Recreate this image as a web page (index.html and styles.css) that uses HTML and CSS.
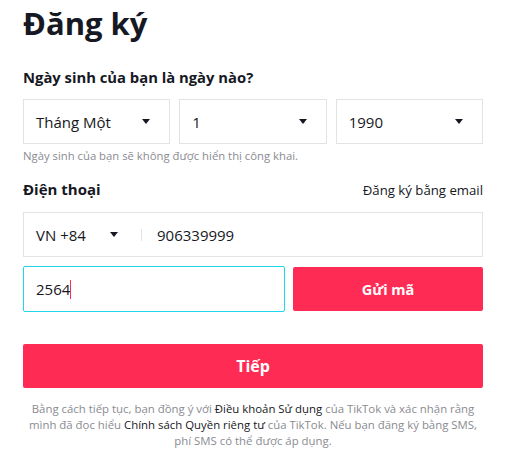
FILE: index.html
```html
<!DOCTYPE html>
<html lang="vi">
<head>
<meta charset="utf-8">
<link rel="stylesheet" href="styles.css">
</head>
<body>
<div class="page">
  <h1 class="title">Đăng ký</h1>
  <div class="label">Ngày sinh của bạn là ngày nào?</div>
  <div class="selects">
    <div class="select"><span>Tháng Một</span><span class="caret"></span></div>
    <div class="select"><span>1</span><span class="caret"></span></div>
    <div class="select"><span>1990</span><span class="caret"></span></div>
  </div>
  <div class="hint">Ngày sinh của bạn sẽ không được hiển thị công khai.</div>
  <div class="phone-head">
    <div class="label-inline">Điện thoại</div>
    <a class="email-link">Đăng ký bằng email</a>
  </div>
  <div class="phone">
    <div class="country"><span>VN +84</span><span class="caret"></span></div>
    <div class="divider"></div>
    <div class="number">906339999</div>
  </div>
  <div class="code-row">
    <div class="code"><span>2564</span><span class="cursor"></span></div>
    <button class="btn send">Gửi mã</button>
  </div>
  <button class="btn next">Tiếp</button>
  <p class="terms">Bằng cách tiếp tục, bạn đồng ý với <b>Điều khoản Sử dụng</b> của TikTok và xác nhận rằng<br>mình đã đọc hiểu <b>Chính sách Quyền riêng tư</b> của TikTok. Nếu bạn đăng ký bằng SMS,<br>phí SMS có thể được áp dụng.</p>
</div>
</body>
</html>
```
FILE: styles.css
```css
* { box-sizing: border-box; }
html, body { margin: 0; padding: 0; background: #fff; }
body {
  font-family: "Open Sans", Lato, "Liberation Sans", sans-serif;
  color: #161823;
}
.page { padding: 0 25px 0 23px; width: 508px; }
.title {
  margin: 0;
  font-size: 31px;
  font-weight: 700;
  line-height: 44px;
  height: 58px;
  padding-top: 1px;
}
.label {
  font-size: 14.8px;
  font-weight: 700;
  line-height: 24px;
  height: 41px;
  padding-top: 7px;
}
.selects {
  display: grid;
  grid-template-columns: 1fr 1fr 1fr;
  gap: 9px;
}
.select {
  height: 45px;
  border: 1px solid #e3e3e4;
  display: flex;
  align-items: center;
  justify-content: space-between;
  padding: 0 19px 0 12px;
  font-size: 15px;
}
.caret {
  width: 0; height: 0;
  border-left: 4px solid transparent;
  border-right: 4px solid transparent;
  border-top: 5px solid #161823;
}
.hint {
  font-size: 11.3px;
  color: #8a8b91;
  line-height: 16px;
  margin-top: 4px;
}
.phone-head {
  display: flex;
  justify-content: space-between;
  align-items: baseline;
  margin-top: 10px;
  height: 38px;
  padding-top: 3px;
}
.label-inline { font-size: 15px; font-weight: 700; line-height: 24px; }
.email-link { font-size: 13.2px; color: #161823; }
.phone {
  height: 45px;
  border: 1px solid #e3e3e4;
  display: flex;
  align-items: center;
  font-size: 15px;
  padding-left: 12px;
}
.country {
  display: flex;
  align-items: center;
  justify-content: space-between;
  width: 82px;
}
.divider {
  width: 1px;
  height: 12px;
  background: #e3e3e4;
  margin: 0 15px 0 23px;
}
.code-row {
  display: flex;
  gap: 8px;
  margin-top: 9px;
  height: 46px;
}
.code {
  flex: 0 0 262px;
  border: 1px solid #20d5ec;
  border-radius: 2px;
  display: flex;
  align-items: center;
  padding-left: 12px;
  font-size: 15px;
}
.cursor {
  display: inline-block;
  width: 1px;
  height: 19px;
  background: #fe2c55;
  margin-left: 0;
}
.btn {
  border: 0;
  border-radius: 2px;
  background: #fe2c55;
  color: #fff;
  font-family: inherit;
  font-weight: 700;
  padding: 0;
}
.send {
  flex: 1;
  height: 44px;
  margin-top: 1px;
  font-size: 14.5px;
}
.next {
  display: block;
  width: 100%;
  height: 44px;
  margin-top: 32px;
  font-size: 16px;
}
.terms {
  margin: 13px 0 0;
  text-align: center;
  font-size: 11.4px;
  line-height: 16px;
  color: #8a8b91;
}
.terms b { font-weight: 400; color: #161823; }
```
